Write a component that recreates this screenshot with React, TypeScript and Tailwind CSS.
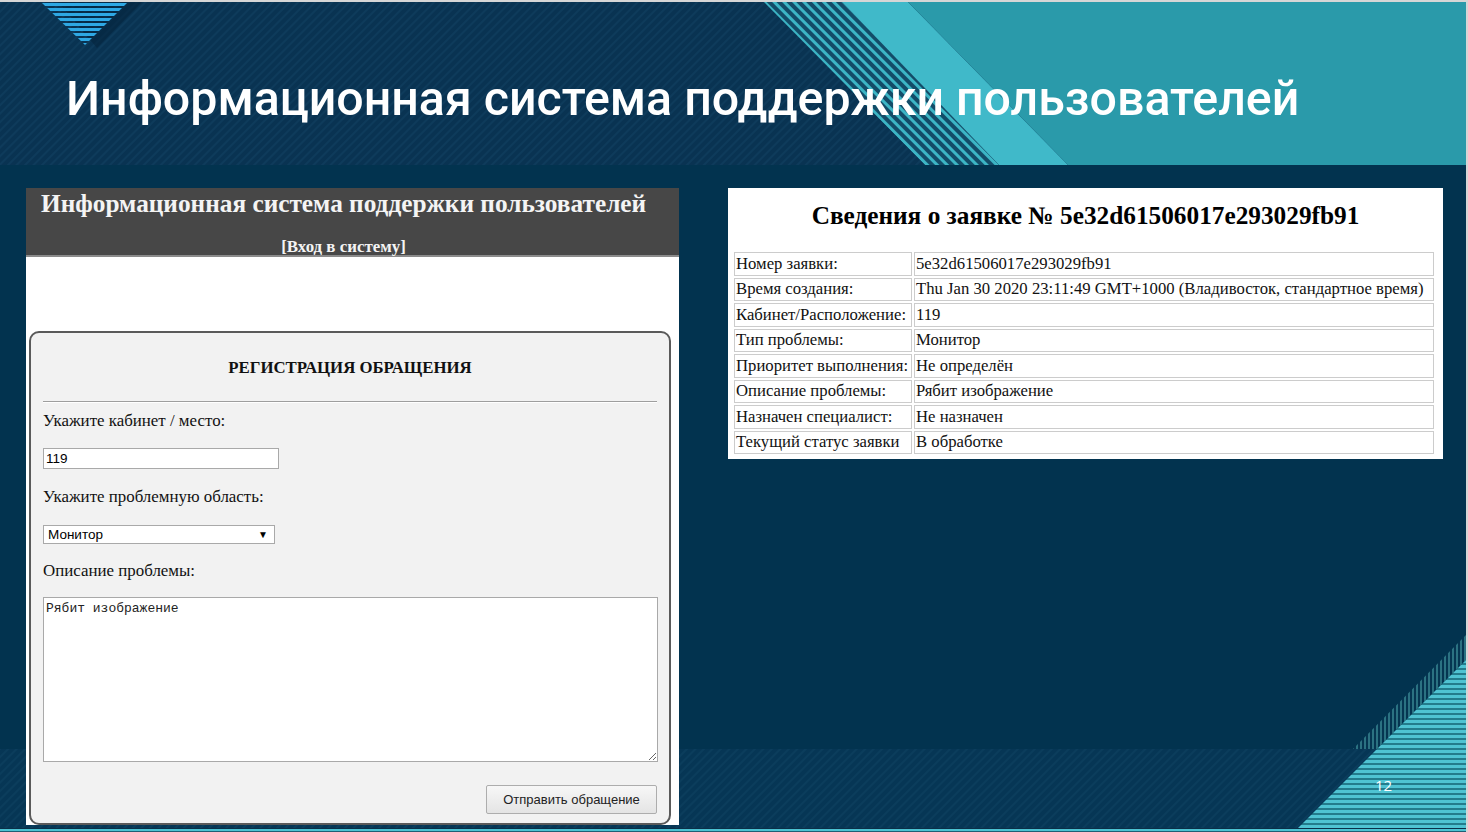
import React from 'react'

const rows: [string, string][] = [
  ['Номер заявки:', '5e32d61506017e293029fb91'],
  ['Время создания:', 'Thu Jan 30 2020 23:11:49 GMT+1000 (Владивосток, стандартное время)'],
  ['Кабинет/Расположение:', '119'],
  ['Тип проблемы:', 'Монитор'],
  ['Приоритет выполнения:', 'Не определён'],
  ['Описание проблемы:', 'Рябит изображение'],
  ['Назначен специалист:', 'Не назначен'],
  ['Текущий статус заявки', 'В обработке'],
]

function HeaderArt() {
  return (
    <svg className="absolute inset-0" width="1466" height="163" viewBox="0 0 1466 163">
      <defs>
        <pattern id="hdrDiag" width="6" height="6" patternUnits="userSpaceOnUse" patternTransform="rotate(45)">
          <rect width="6" height="6" fill="#093352" />
          <rect width="2" height="6" fill="#0e3b5b" />
        </pattern>
        <pattern id="hdrBand" width="7" height="7" patternUnits="userSpaceOnUse" patternTransform="rotate(-45)">
          <rect width="7" height="7" fill="#134c68" />
          <rect width="3" height="7" fill="#3cb5c5" />
        </pattern>
        <pattern id="triStripes" width="5" height="5" patternUnits="userSpaceOnUse">
          <rect y="1" width="5" height="3" fill="#2ea8e4" />
        </pattern>
      </defs>
      <rect width="1466" height="163" fill="url(#hdrDiag)" />
      <polygon points="58,0 142,0 97,46" fill="#05253e" opacity="0.6" />
      <polygon points="41,0 128,0 85,43" fill="url(#triStripes)" />
      <polygon points="764,0 842,0 999,163 925,163" fill="url(#hdrBand)" />
      <polygon points="842,0 908,0 1068,163 999,163" fill="#40b9c9" />
      <polygon points="908,0 1466,0 1466,163 1068,163" fill="#2a9aaa" />
    </svg>
  )
}

function FooterArt() {
  return (
    <svg className="absolute left-0 bottom-0" width="1466" height="212" viewBox="0 0 1466 212">
      <defs>
        <pattern id="ftDiag" width="6" height="6" patternUnits="userSpaceOnUse" patternTransform="rotate(45)">
          <rect width="6" height="6" fill="#063655" />
          <rect width="2" height="6" fill="#0b3d5c" />
        </pattern>
        <pattern id="ftVert" width="4" height="4" patternUnits="userSpaceOnUse">
          <rect width="4" height="4" fill="#053551" />
          <rect width="2" height="4" fill="#2b7282" />
        </pattern>
        <pattern id="ftHor" width="5" height="5" patternUnits="userSpaceOnUse">
          <rect width="5" height="5" fill="#237c8c" />
          <rect width="5" height="3" fill="#4fc3d2" />
        </pattern>
      </defs>
      <rect y="129" width="1466" height="80" fill="url(#ftDiag)" />
      <polygon points="1466,15 1353,129 1377,129 1466,40" fill="url(#ftVert)" />
      <polygon points="1466,40 1298,208 1466,208" fill="url(#ftHor)" />
      <rect y="208" width="1466" height="1" fill="#0a2f48" />
      <rect y="209" width="1466" height="2" fill="#4cc2d2" />
      <rect y="211" width="1466" height="1" fill="#1d5f74" />
    </svg>
  )
}

function RequestForm() {
  return (
    <div className="w-[653px] h-[637px] bg-white overflow-hidden flex flex-col font-['Liberation_Serif','Times_New_Roman',serif]">
      <div className="h-[69px] bg-[#474747] border-b-2 border-[#8a8a8a] flex flex-col text-[#f4f4f4] font-bold">
        <div className="pl-[15px] pt-[1px] text-[25.3px] leading-[28px] whitespace-nowrap">Информационная система поддержки пользователей</div>
        <div className="mt-[20px] pr-[18px] text-center text-[16.9px] leading-[20px]">[Вход в систему]</div>
      </div>
      <div className="h-[74px]" />
      <div className="ml-[3px] w-[642px] flex-1 border-2 border-[#5a5a5a] rounded-[10px] bg-[#f2f2f2] px-[12px] flex flex-col text-[16.9px] leading-[20px] text-[#111]">
        <div className="mt-[25px] text-center font-bold text-[16.8px]">РЕГИСТРАЦИЯ ОБРАЩЕНИЯ</div>
        <div className="mt-[23px] h-[2px] border-t border-[#9e9e9e] border-b border-b-white" />
        <div className="mt-[8px]">Укажите кабинет / место:</div>
        <input
          readOnly
          value="119"
          className="mt-[17px] w-[236px] h-[21px] border border-[#a9a9a9] bg-white px-[2px] text-[13.5px] font-['Liberation_Sans',Arial,sans-serif] text-black outline-none"
        />
        <div className="mt-[18px]">Укажите проблемную область:</div>
        <div className="mt-[18px] w-[232px] h-[19px] border border-[#a9a9a9] bg-white flex items-center justify-between pl-[4px] pr-[6px] text-[13.5px] font-['Liberation_Sans',Arial,sans-serif] text-black">
          <span>Монитор</span>
          <span className="text-[10px] leading-none">▼</span>
        </div>
        <div className="mt-[17px]">Описание проблемы:</div>
        <textarea
          readOnly
          defaultValue="Рябит изображение"
          className="mt-[16px] w-[615px] h-[165px] border border-[#a9a9a9] bg-white px-[2px] py-[3px] text-[13px] leading-[15px] font-['Liberation_Mono','Courier_New',monospace] text-[#222] outline-none"
        />
        <div className="mt-[23px] flex justify-end">
          <button className="w-[171px] h-[29px] border border-[#adadad] rounded-[2px] bg-gradient-to-b from-[#f7f7f7] to-[#e4e4e4] text-[13px] text-[#222] font-['Liberation_Sans',Arial,sans-serif]">
            Отправить обращение
          </button>
        </div>
      </div>
    </div>
  )
}

function RequestInfo() {
  return (
    <div className="ml-[49px] w-[715px] h-[271px] bg-white flex flex-col font-['Liberation_Serif','Times_New_Roman',serif] text-[#111]">
      <div className="mt-[13px] text-center font-bold text-[25.3px] leading-[28px] text-black whitespace-nowrap">
        Сведения о заявке № 5e32d61506017e293029fb91
      </div>
      <table className="mt-[21px] ml-[4px] w-[704px] border-separate border-spacing-[2px] text-[16.7px] leading-[20px]">
        <tbody>
          {rows.map(([k, v]) => (
            <tr key={k}>
              <td className="w-[178px] h-[23.5px] border border-[#cccccc] px-[1px] py-0 whitespace-nowrap">{k}</td>
              <td className="h-[23.5px] border border-[#cccccc] px-[1px] py-0 whitespace-nowrap">{v}</td>
            </tr>
          ))}
        </tbody>
      </table>
    </div>
  )
}

export default function App() {
  return (
    <div className="relative w-[1468px] h-[832px] overflow-hidden bg-[#02334f] border-t-2 border-r-2 border-[#d6d6d6]">
      <FooterArt />
      <div className="relative h-[163px]">
        <HeaderArt />
        <h1 className="relative pl-[66px] pt-[72px] text-[48.3px] leading-[50px] font-medium text-white font-['Roboto','Open_Sans',sans-serif] whitespace-nowrap">
          Информационная система поддержки пользователей
        </h1>
      </div>
      <div className="relative flex items-start pl-[26px] pt-[23px]">
        <RequestForm />
        <RequestInfo />
      </div>
      <div className="absolute left-[1375px] top-[775px] text-[15px] leading-[16px] text-white font-['Open_Sans',sans-serif]">12</div>
    </div>
  )
}
